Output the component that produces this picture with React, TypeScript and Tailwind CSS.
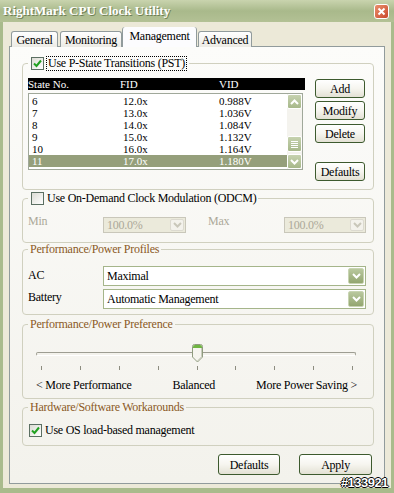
import React from "react";

const states = [
  ["6", "12.0x", "0.988V"],
  ["7", "13.0x", "1.036V"],
  ["8", "14.0x", "1.084V"],
  ["9", "15.0x", "1.132V"],
  ["10", "16.0x", "1.164V"],
  ["11", "17.0x", "1.180V"],
];

const Check = ({ on }: { on?: boolean }) => (
  <span className="flex h-[13px] w-[13px] shrink-0 items-center justify-center border border-[#5b6f62] bg-linear-to-br from-[#dcdcd4] to-white">
    {on && (
      <svg width="9" height="9" viewBox="0 0 9 9">
        <path d="M1 4.5 L3.5 7 L8 1.5" stroke="#21a121" strokeWidth="2" fill="none" />
      </svg>
    )}
  </span>
);

const Chevron = ({ up, color = "#fff" }: { up?: boolean; color?: string }) => (
  <svg width="9" height="6" viewBox="0 0 9 6">
    <path d={up ? "M1 5 L4.5 1.5 L8 5" : "M1 1 L4.5 4.5 L8 1"} stroke={color} strokeWidth="2" fill="none" />
  </svg>
);

const Group = ({ legend, className = "", children }: { legend: React.ReactNode; className?: string; children?: React.ReactNode }) => (
  <fieldset className={`w-[352px] shrink-0 rounded-[4px] border border-[#d0d0bf] ${className}`}>
    <legend className="ml-[5px] px-[2px]">
      <span className="flex h-[13px] items-center leading-[13px]">{legend}</span>
    </legend>
    {children}
  </fieldset>
);

const Button = ({ label, className = "" }: { label: string; className?: string }) => (
  <div className={`flex items-center justify-center rounded-[3px] border border-[#3d5a2e] bg-linear-to-b from-white via-[#f6f5ef] to-[#e3e1d4] ${className}`}>
    {label}
  </div>
);

const Combo = ({ value, className = "", disabled }: { value: string; className?: string; disabled?: boolean }) =>
  disabled ? (
    <div className={`flex border border-[#c9c7ba] bg-[#ebeadb] text-[#aca899] ${className}`}>
      <span className="flex-1 pl-[3px] leading-[14px]">{value}</span>
      <span className="m-[1px] flex w-[14px] items-center justify-center rounded-[2px] border border-[#dcdad0] bg-[#f3f2ec]">
        <Chevron color="#c9c7ba" />
      </span>
    </div>
  ) : (
    <div className={`flex border border-[#a5b58a] bg-white ${className}`}>
      <span className="flex-1 pl-[3px] leading-[18px]">{value}</span>
      <span className="m-[1px] flex w-[16px] items-center justify-center rounded-[2px] border border-[#c8d4b2] bg-linear-to-b from-[#b9c89e] to-[#93a670]">
        <Chevron />
      </span>
    </div>
  );

const ScrollArrow = ({ up }: { up?: boolean }) => (
  <div className="flex h-[15px] w-[15px] items-center justify-center rounded-[2px] border border-white bg-linear-to-b from-[#c6d2af] to-[#a7b88a]">
    <Chevron up={up} />
  </div>
);

const Tab = ({ label, className = "" }: { label: string; className?: string }) => (
  <div className={`flex h-[16px] items-center justify-center rounded-t-[3px] border border-b-0 border-[#919b9c] bg-linear-to-b from-white to-[#ecebe5] ${className}`}>
    {label}
  </div>
);

export default function App() {
  return (
    <div className="relative flex h-[493px] w-[394px] flex-col overflow-hidden font-['Liberation_Serif',serif] text-[12px] tracking-[-0.25px] text-black">
      {/* title bar */}
      <div className="flex h-[22px] shrink-0 items-center justify-between bg-linear-to-b from-[#c9d4ae] via-[#a9b98b] to-[#b3c195] pl-[3px] pr-[5px]">
        <span className="text-[13px] font-bold tracking-normal text-white [text-shadow:1px_1px_0_#6f7f55]">RightMark CPU Clock Utility</span>
        <span className="flex h-[15px] w-[15px] items-center justify-center rounded-[3px] border border-white bg-linear-to-br from-[#e98f6c] to-[#c9462a]">
          <svg width="9" height="9" viewBox="0 0 9 9">
            <path d="M1.5 1.5 L7.5 7.5 M7.5 1.5 L1.5 7.5" stroke="#fff" strokeWidth="2" />
          </svg>
        </span>
      </div>

      {/* window body */}
      <div className="flex flex-1 flex-col border-x-[3px] border-b-[5px] border-x-[#a9bb8c] border-b-[#a9bb8c] bg-[#ece9d8] px-[6px] pt-[5px] pb-[4px]">
        {/* tabs */}
        <div className="relative z-10 flex h-[20px] items-end pl-[2px]">
          <Tab label="General" className="w-[47px]" />
          <Tab label="Monitoring" className="ml-[2px] w-[62px]" />
          <div className="flex h-[20px] w-[75px] flex-col overflow-hidden rounded-t-[3px] border-x border-[#919b9c] bg-[#fcfcfe]">
            <div className="h-[3px] bg-[#e68b2c]" />
            <div className="flex flex-1 items-center justify-center pb-[2px]">Management</div>
          </div>
          <Tab label="Advanced" className="ml-px w-[54px]" />
        </div>

        {/* tab panel */}
        <div className="-mt-px flex flex-1 flex-col border border-[#919b9c] bg-linear-to-b from-[#fcfcfa] to-[#f3f2ec] pt-[10px] pl-[12px]">
          <Group
            className="h-[133px]"
            legend={
              <>
                <span className="ml-px">
                  <Check on />
                </span>
                <span className="ml-[2px] border border-dotted border-black px-px">Use P-State Transitions (PST)</span>
              </>
            }
          >
            <div className="mt-[8px] flex items-start pl-[5px]">
              <div className="flex w-[277px] flex-col">
                <div className="flex h-[12px] items-center bg-black text-[11px] leading-[12px] tracking-normal text-white">
                  <span className="w-[92px]">State No.</span>
                  <span className="w-[99px]">FID</span>
                  <span>VID</span>
                </div>
                <div className="mt-[3px] flex h-[77px] w-[275px] border border-[#a0a89a] bg-white">
                  <div className="flex flex-1 flex-col pt-px text-[11px] tracking-normal">
                    {states.map(([s, f, v], i) => (
                      <div key={s} className={`flex h-[12px] items-center leading-[12px] ${i === 5 ? "bg-[#959f7b] text-white" : ""}`}>
                        <span className="w-[94px] pl-[3px]">{s}</span>
                        <span className="w-[96px]">{f}</span>
                        <span>{v}</span>
                      </div>
                    ))}
                  </div>
                  <div className="flex w-[15px] flex-col bg-[#f4f3ee]">
                    <ScrollArrow up />
                    <div className="flex-1" />
                    <div className="flex h-[16px] w-[15px] flex-col items-center justify-center gap-px rounded-[2px] border border-white bg-linear-to-b from-[#c6d2af] to-[#a7b88a]">
                      <span className="h-px w-[7px] bg-white" />
                      <span className="h-px w-[7px] bg-white" />
                      <span className="h-px w-[7px] bg-white" />
                      <span className="h-px w-[7px] bg-white" />
                    </div>
                    <div className="mt-[2px]">
                      <ScrollArrow />
                    </div>
                  </div>
                </div>
              </div>
              <div className="ml-[10px] mt-px flex flex-col">
                <Button label="Add" className="h-[19px] w-[50px]" />
                <Button label="Modify" className="mt-[3px] h-[19px] w-[50px]" />
                <Button label="Delete" className="mt-[4px] h-[19px] w-[50px]" />
                <Button label="Defaults" className="mt-[19px] h-[19px] w-[50px]" />
              </div>
            </div>
          </Group>

          <Group
            className="mt-[2px] h-[51px]"
            legend={
              <>
                <span className="ml-px">
                  <Check />
                </span>
                <span className="ml-[3px]">Use On-Demand Clock Modulation (ODCM)</span>
              </>
            }
          >
            <div className="mt-[10px] flex items-start pl-[5px] text-[#aca899]">
              <span className="w-[75px] leading-[13px]">Min</span>
              <Combo disabled value="100.0%" className="mt-[2px] h-[16px] w-[83px]" />
              <span className="ml-[22px] w-[76px] leading-[13px]">Max</span>
              <Combo disabled value="100.0%" className="mt-[2px] h-[16px] w-[82px]" />
            </div>
          </Group>

          <Group className="h-[72px]" legend={<span className="text-[#8b5a1f]">Performance/Power Profiles</span>}>
            <div className="mt-[10px] flex flex-col gap-[3px] pl-[5px] pr-[7px]">
              <div className="flex items-start">
                <span className="w-[75px] pt-[3px] leading-[13px]">AC</span>
                <Combo value="Maximal" className="h-[20px] flex-1" />
              </div>
              <div className="flex items-start">
                <span className="w-[75px] pt-[2px] leading-[13px]">Battery</span>
                <Combo value="Automatic Management" className="h-[20px] flex-1" />
              </div>
            </div>
          </Group>

          <Group className="mt-[3px] h-[81px]" legend={<span className="text-[#8b5a1f]">Performance/Power Preference</span>}>
            <div className="relative mt-[13px] ml-[13px] flex h-[19px] w-[320px] items-center">
              <div className="h-[4px] w-full rounded-[2px] border border-[#9d9d92] border-b-white bg-[#f3f2ec]" />
              <svg className="absolute top-0 left-[156px]" width="11" height="19" viewBox="0 0 11 19">
                <path d="M0.5 2.5 Q0.5 0.5 2.5 0.5 H8.5 Q10.5 0.5 10.5 2.5 V13 L5.5 18 L0.5 13 Z" fill="#f6f5ef" stroke="#8f9b7e" />
                <path d="M1 3 Q1 1 3 1 H8 Q10 1 10 3 V4 H1 Z" fill="#6fb542" />
                <path d="M9.5 4 V12.8 L5.5 16.8" stroke="#c8ccbd" fill="none" />
              </svg>
            </div>
            <div className="mt-[3px] ml-[18px] flex h-[4px] w-[312px] justify-between">
              {Array.from({ length: 9 }).map((_, i) => (
                <span key={i} className="h-[4px] w-px bg-[#8d8d80]" />
              ))}
            </div>
            <div className="mt-[9px] ml-[13px] flex w-[321px] justify-between leading-[13px]">
              <span>&lt; More Performance</span>
              <span>Balanced</span>
              <span>More Power Saving &gt;</span>
            </div>
          </Group>

          <Group className="mt-[2px] h-[45px]" legend={<span className="text-[#8b5a1f]">Hardware/Software Workarounds</span>}>
            <div className="mt-[10px] flex items-center pl-[6px] leading-[13px]">
              <Check on />
              <span className="ml-[3px]">Use OS load-based management</span>
            </div>
          </Group>

          <div className="mt-[8px] flex w-[352px] justify-end pr-[2px]">
            <Button label="Defaults" className="h-[21px] w-[62px]" />
            <Button label="Apply" className="ml-[19px] h-[21px] w-[73px]" />
          </div>
        </div>
      </div>

      <span className="absolute right-[6px] bottom-px font-['Liberation_Sans',sans-serif] text-[13px] font-bold tracking-[-0.5px] text-white [text-shadow:-1px_0_#000,1px_0_#000,0_-1px_#000,0_1px_#000]">
        #133921
      </span>
    </div>
  );
}
